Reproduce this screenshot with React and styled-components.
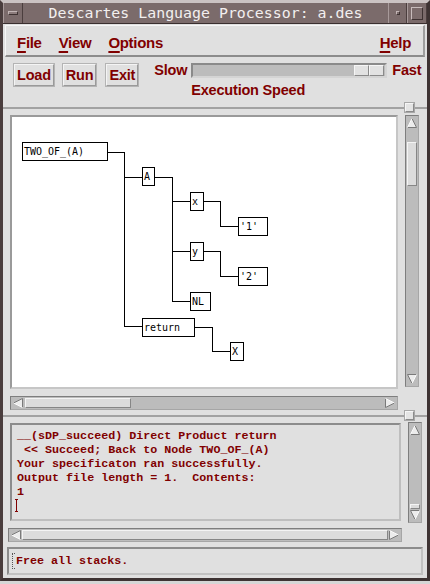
import React from "react";
import styled, { createGlobalStyle } from "styled-components";

const MAROON = "#800000";
const FACE = "#e0e0e0";

const GlobalStyle = createGlobalStyle`
    html, body {
        margin: 0;
        padding: 0;
        background: #d6d6d6;
    }
    body {
        width: 430px;
        height: 584px;
        overflow: hidden;
    }
`;

const Window = styled.div`
    width: 430px;
    height: 581px;
    box-sizing: border-box;
    border-top: 3px solid #cbc3c3;
    border-left: 3px solid #4a3d3d;
    border-right: 3px solid #3e3333;
    border-bottom: 3px solid #3e3333;
    background: ${FACE};
    display: flex;
    flex-direction: column;
`;

const TitleBar = styled.div`
    display: flex;
    height: 20px;
    flex: none;
    background: #7b6b6b;
    border-bottom: 1px solid #3a2f2f;
`;

const TitleButton = styled.div`
    flex: none;
    width: ${(p) => p.$w}px;
    box-sizing: border-box;
    display: flex;
    align-items: center;
    justify-content: center;
    border-left: 1px solid #a89a9a;
    border-right: 1px solid #4b3e3e;
`;

const MinGlyph = styled.div`
    width: 10px;
    height: 4px;
    box-sizing: border-box;
    background: #8c7c7c;
    border-top: 1px solid #c2b5b5;
    border-left: 1px solid #c2b5b5;
    border-bottom: 1px solid #3e3232;
    border-right: 1px solid #3e3232;
`;

const DotGlyph = styled.div`
    width: 4px;
    height: 4px;
    box-sizing: border-box;
    border: 1px solid;
    border-color: #c2b5b5 #3e3232 #3e3232 #c2b5b5;
`;

const MaxGlyph = styled.div`
    width: 12px;
    height: 13px;
    box-sizing: border-box;
    border: 1px solid;
    border-color: #c8bcbc #3e3232 #3e3232 #c8bcbc;
`;

const TitleText = styled.div`
    flex: 1;
    text-align: center;
    font-family: "DejaVu Sans Mono", "Liberation Mono", monospace;
    font-size: 14.9px;
    line-height: 20px;
    color: #f2efef;
    white-space: nowrap;
`;

const Body = styled.div`
    flex: 1;
    display: flex;
    flex-direction: column;
    padding-bottom: 3px;
    font-family: "Liberation Sans", Arial, sans-serif;
`;

const MenuBar = styled.div`
    flex: none;
    height: 32px;
    margin: 1px 2px 0 2px;
    box-sizing: border-box;
    display: flex;
    align-items: center;
    padding: 3px 12px 0 11px;
    border-top: 1px solid #f6f6f6;
    border-left: 1px solid #f6f6f6;
    border-bottom: 2px solid #8c8c8c;
    border-right: 2px solid #9e9e9e;
`;

const MenuItem = styled.span`
    font-size: 15px;
    font-weight: bold;
    letter-spacing: -0.3px;
    color: ${MAROON};
    margin-right: ${(p) => (p.$last ? 0 : 17)}px;
    margin-left: ${(p) => (p.$last ? "auto" : 0)};

    u {
        text-decoration-thickness: 2px;
        text-underline-offset: 3px;
    }
`;

const ToolArea = styled.div`
    flex: none;
    height: 50px;
    box-sizing: border-box;
    display: flex;
    align-items: flex-start;
    padding: 6px 0 0 10px;
`;

const PushButton = styled.div`
    height: 24px;
    box-sizing: border-box;
    padding: 0 2px;
    margin-right: ${(p) => p.$gap}px;
    display: flex;
    align-items: center;
    justify-content: center;
    border: 2px solid;
    border-color: #f4f4f4 #9a9a9a #9a9a9a #f4f4f4;
    outline: 1px solid #b4b4b4;
    outline-offset: -1px;
    font-size: 14.5px;
    font-weight: bold;
    letter-spacing: -0.2px;
    color: ${MAROON};
`;

const SpeedControl = styled.div`
    display: grid;
    grid-template-columns: auto 196px auto;
    column-gap: 4px;
    align-items: center;
`;

const SpeedLabel = styled.span`
    font-size: 14.5px;
    font-weight: bold;
    letter-spacing: -0.2px;
    line-height: 15px;
    color: ${MAROON};
    margin-left: ${(p) => p.$ml || 0}px;
`;

const Trough = styled.div`
    height: 15px;
    box-sizing: border-box;
    display: flex;
    justify-content: flex-end;
    align-items: center;
    padding-right: 1px;
    background: #bcbcbc;
    border: 2px solid;
    border-color: #8a8a8a #d4d4d4 #d4d4d4 #8a8a8a;
`;

const SliderHalf = styled.div`
    width: 15px;
    height: 11px;
    box-sizing: border-box;
    background: #e2e2e2;
    border: 1px solid;
    border-color: #f6f6f6 #8a8a8a #8a8a8a #f6f6f6;
`;

const SpeedCaption = styled.span`
    grid-column: 2;
    margin-top: 4px;
    font-size: 14.5px;
    font-weight: bold;
    letter-spacing: -0.2px;
    line-height: 17px;
    color: ${MAROON};
    white-space: nowrap;
`;

const Separator = styled.div`
    flex: none;
    position: relative;
    height: 2px;
    background: #a2a2a2;
`;

const Sash = styled.div`
    position: absolute;
    right: 13px;
    top: -4px;
    width: 9px;
    height: 9px;
    box-sizing: border-box;
    background: #e4e4e4;
    border: 1px solid;
    border-color: #f6f6f6 #8a8a8a #8a8a8a #f6f6f6;
    outline: 1px solid #a8a8a8;
`;

const Pane = styled.div`
    flex: none;
    display: grid;
    grid-template-columns: ${(p) => p.$cols};
    grid-template-rows: ${(p) => p.$rows};
    column-gap: 7px;
    row-gap: 7px;
    padding: 6px 0 5px 7px;
`;

const Sunken = styled.div`
    box-sizing: border-box;
    border: 2px solid;
    border-color: ${(p) => p.$dark} ${(p) => p.$light} ${(p) => p.$light} ${(p) => p.$dark};
    background: ${(p) => p.$bg};
    min-width: 0;
    min-height: 0;
    overflow: hidden;
`;

const Canvas = styled.div`
    position: relative;
    width: 100%;
    height: 100%;
`;

const Wires = styled.svg`
    position: absolute;
    left: 0;
    top: 0;
`;

const Node = styled.div`
    position: absolute;
    left: ${(p) => p.$x}px;
    top: ${(p) => p.$y}px;
    width: ${(p) => p.$w}px;
    height: 19px;
    box-sizing: border-box;
    border: 1px solid #000;
    background: #fff;
    padding-left: 1px;
    font-family: "DejaVu Sans Mono", "Liberation Mono", monospace;
    font-size: 9.97px;
    line-height: 17px;
    color: #000;
    white-space: nowrap;
    overflow: hidden;
`;

const Scroll = styled.div`
    box-sizing: border-box;
    display: flex;
    flex-direction: ${(p) => (p.$vertical ? "column" : "row")};
    padding: 1px;
    background: #bcbcbc;
    border: 1px solid;
    border-color: #7e7e7e #a6a6a6 #a6a6a6 #7e7e7e;
    margin: ${(p) => p.$margin || 0};
    align-self: stretch;
`;

const ArrowCell = styled.div`
    flex: none;
    width: ${(p) => (p.$vertical ? "100%" : "12px")};
    height: ${(p) => (p.$vertical ? "12px" : "100%")};
    display: flex;
    align-items: center;
    justify-content: center;
`;

const ArrowSvg = styled.svg`
    transform: rotate(${(p) => p.$rot}deg);
`;

const Track = styled.div`
    flex: 1;
    min-width: 0;
    min-height: 0;
    display: flex;
    flex-direction: ${(p) => (p.$vertical ? "column" : "row")};
`;

const Thumb = styled.div`
    box-sizing: border-box;
    flex: ${(p) => (p.$fill ? 1 : "none")};
    ${(p) =>
        p.$vertical
            ? `margin-top: ${p.$auto ? "auto" : p.$offset + "px"}; height: ${p.$size}px;`
            : `margin-left: ${p.$offset}px; width: ${p.$size}px;`}
    background: #dcdcdc;
    border: 1px solid;
    border-color: #f4f4f4 #868686 #868686 #f4f4f4;
`;

const OutputText = styled.pre`
    margin: 0;
    padding: 4px 5px;
    font-family: "Liberation Mono", "DejaVu Sans Mono", monospace;
    font-weight: bold;
    font-size: 11.7px;
    line-height: 14px;
    color: ${MAROON};
`;

const Caret = styled.span`
    display: inline-block;
    vertical-align: top;
    margin: 0 0 0 -2px;
    width: 3px;
    height: 13px;
    box-sizing: border-box;
    border-top: 1px solid ${MAROON};
    border-bottom: 1px solid ${MAROON};
    background: linear-gradient(
        to right,
        transparent 1px,
        ${MAROON} 1px,
        ${MAROON} 2px,
        transparent 2px
    );
`;

const StatusBar = styled.div`
    flex: none;
    height: 28px;
    margin: 0 4px;
    box-sizing: border-box;
    display: flex;
    align-items: center;
    padding-left: 3px;
    border: 2px solid;
    border-color: #8c8c8c #c2c2c2 #c2c2c2 #8c8c8c;
    font-family: "Liberation Mono", "DejaVu Sans Mono", monospace;
    font-weight: bold;
    font-size: 11.7px;
    color: ${MAROON};
    white-space: pre;
`;

const FocusMark = styled.span`
    display: inline-block;
    width: 2px;
    height: 14px;
    margin-right: 1px;
    border-left: 1px dotted #555;
    border-top: 1px dotted #555;
    border-bottom: 1px dotted #555;
`;

function Arrow({ dir }) {
    const rot = { up: 0, right: 90, down: 180, left: 270 }[dir];
    return (
        <ArrowSvg $rot={rot} width='10' height='10' viewBox='0 0 10 10'>
            <polygon points='5,0.5 9.5,9.5 0.5,9.5' fill='#ececec' />
            <path d='M5 0.5 L9.5 9.5 L0.5 9.5' fill='none' stroke='#7a7a7a' strokeWidth='1' />
            <path d='M0.5 9.5 L5 0.5' fill='none' stroke='#fafafa' strokeWidth='1' />
        </ArrowSvg>
    );
}

function ScrollBar({ vertical, thumb, margin }) {
    return (
        <Scroll $vertical={vertical} $margin={margin}>
            <ArrowCell $vertical={vertical}>
                <Arrow dir={vertical ? "up" : "left"} />
            </ArrowCell>
            <Track $vertical={vertical}>
                <Thumb
                    $vertical={vertical}
                    $offset={thumb.offset}
                    $size={thumb.size}
                    $fill={thumb.fill}
                    $auto={thumb.auto}
                />
            </Track>
            <ArrowCell $vertical={vertical}>
                <Arrow dir={vertical ? "down" : "right"} />
            </ArrowCell>
        </Scroll>
    );
}

// tree nodes, coordinates inside the white drawing area
const nodes = [
    { label: "TWO_OF_(A)", x: 10, y: 25, w: 86 },
    { label: "A", x: 130, y: 50, w: 13 },
    { label: "x", x: 178, y: 75, w: 14 },
    { label: "'1'", x: 226, y: 100, w: 30 },
    { label: "y", x: 178, y: 125, w: 14 },
    { label: "'2'", x: 226, y: 150, w: 30 },
    { label: "NL", x: 178, y: 175, w: 21 },
    { label: "return", x: 130, y: 201, w: 53 },
    { label: "X", x: 218, y: 225, w: 14 },
];

const wires = [
    "M95 35.5 H112.5 V209.5 H130",
    "M112.5 60.5 H130",
    "M142 60.5 H160.5 V184.5 H178",
    "M160.5 84.5 H178",
    "M160.5 134.5 H178",
    "M191 84.5 H208.5 V109.5 H226",
    "M191 134.5 H208.5 V159.5 H226",
    "M182 210.5 H200.5 V234.5 H218",
];

const output = [
    "__(sDP_succeed) Direct Product return",
    " << Succeed; Back to Node TWO_OF_(A)",
    "Your specificaton ran successfully.",
    "Output file length = 1.  Contents:",
    "1",
];

export default function App() {
    return (
        <>
            <GlobalStyle />
            <Window>
                <TitleBar>
                    <TitleButton $w={20}>
                        <MinGlyph />
                    </TitleButton>
                    <TitleText>Descartes Language Processor: a.des</TitleText>
                    <TitleButton $w={19}>
                        <DotGlyph />
                    </TitleButton>
                    <TitleButton $w={20}>
                        <MaxGlyph />
                    </TitleButton>
                </TitleBar>
                <Body>
                    <MenuBar>
                        <MenuItem>
                            <u>F</u>ile
                        </MenuItem>
                        <MenuItem>
                            <u>V</u>iew
                        </MenuItem>
                        <MenuItem>
                            <u>O</u>ptions
                        </MenuItem>
                        <MenuItem $last>
                            <u>H</u>elp
                        </MenuItem>
                    </MenuBar>
                    <ToolArea>
                        <PushButton $gap={7}>Load</PushButton>
                        <PushButton $gap={8}>Run</PushButton>
                        <PushButton $gap={15}>Exit</PushButton>
                        <SpeedControl>
                            <SpeedLabel>Slow</SpeedLabel>
                            <Trough>
                                <SliderHalf />
                                <SliderHalf />
                            </Trough>
                            <SpeedLabel $ml={1}>Fast</SpeedLabel>
                            <SpeedCaption>Execution Speed</SpeedCaption>
                        </SpeedControl>
                    </ToolArea>
                    <Separator>
                        <Sash />
                    </Separator>
                    <Pane $cols='388px 14px' $rows='274px 14px'>
                        <Sunken $dark='#9a9a9a' $light='#c6c6c6' $bg='#fff'>
                            <Canvas>
                                <Wires width='384' height='270'>
                                    {wires.map((d) => (
                                        <path
                                            key={d}
                                            d={d}
                                            fill='none'
                                            stroke='#000'
                                            strokeWidth='1'
                                            shapeRendering='crispEdges'
                                        />
                                    ))}
                                </Wires>
                                {nodes.map((n) => (
                                    <Node key={n.label} $x={n.x} $y={n.y} $w={n.w}>
                                        {n.label}
                                    </Node>
                                ))}
                            </Canvas>
                        </Sunken>
                        <ScrollBar vertical thumb={{ offset: 13, size: 44 }} margin='0 0 2px 0' />
                        <ScrollBar thumb={{ offset: 1, size: 106 }} />
                    </Pane>
                    <Separator>
                        <Sash />
                    </Separator>
                    <Pane $cols='391px 14px' $rows='98px 14px'>
                        <Sunken $dark='#8c8c8c' $light='#bebebe' $bg={FACE}>
                            <OutputText>
                                {output.join("\n")}
                                {"\n"}
                                <Caret />
                            </OutputText>
                        </Sunken>
                        <ScrollBar vertical thumb={{ auto: true, size: 5 }} margin='-1px 0 -2px 0' />
                        <ScrollBar thumb={{ fill: true, offset: 0 }} margin='0 -1px 0 -2px' />
                    </Pane>
                    <StatusBar>
                        <FocusMark />
                        Free all stacks.
                    </StatusBar>
                </Body>
            </Window>
        </>
    );
}
